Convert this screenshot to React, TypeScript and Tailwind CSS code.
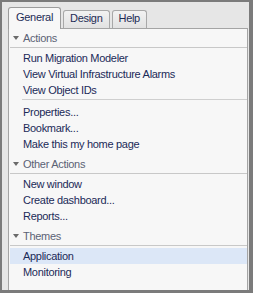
import React from "react";

type Item = { label: string; active?: boolean };

const sections: { title: string; groups: Item[][] }[] = [
  {
    title: "Actions",
    groups: [
      [
        { label: "Run Migration Modeler" },
        { label: "View Virtual Infrastructure Alarms" },
        { label: "View Object IDs" },
      ],
      [
        { label: "Properties..." },
        { label: "Bookmark..." },
        { label: "Make this my home page" },
      ],
    ],
  },
  {
    title: "Other Actions",
    groups: [
      [
        { label: "New window" },
        { label: "Create dashboard..." },
        { label: "Reports..." },
      ],
    ],
  },
  {
    title: "Themes",
    groups: [[{ label: "Application", active: true }, { label: "Monitoring" }]],
  },
];

function Tab({ label, active }: { label: string; active?: boolean }) {
  if (active) {
    return (
      <div className="relative z-10 -mb-px h-[22px] px-[7px] pt-[4px] rounded-t-[3px] border border-b-0 border-[#9c9c9c] bg-[#f7f7f7] text-[#1d2b55]">
        {label}
      </div>
    );
  }
  return (
    <div className="h-[18px] px-[6px] pt-[2px] rounded-t-[3px] border border-b-0 border-[#a8a8a8] bg-gradient-to-b from-[#f2f2f2] to-[#e2e2e2] text-[#1d2b55]">
      {label}
    </div>
  );
}

function Header({ title, first }: { title: string; first?: boolean }) {
  return (
    <div
      className={
        "ml-[1px] h-[19px] flex items-center gap-[4px] pl-[3px] border-b border-[#c8c8c8] text-[#5b6275] " +
        (first ? "" : "mt-[3px]")
      }
    >
      <span className="w-0 h-0 border-l-[3px] border-r-[3px] border-t-[4px] border-l-transparent border-r-transparent border-t-[#6a6a6a]" />
      <span>{title}</span>
    </div>
  );
}

export default function App() {
  return (
    <div
      className="w-[253px] h-[293px] bg-[#7b7b7b] pt-[2px] pl-[2px] pr-[4px] pb-[3px] text-[11px] tracking-[-0.3px] leading-none"
      style={{ fontFamily: '"Liberation Sans", Arial, sans-serif' }}
    >
      <div className="h-full bg-[#e6e6e6] flex flex-col pl-[6px] pr-px">
        <div className="h-[26px] flex items-end gap-[2px] shrink-0">
          <Tab label="General" active />
          <Tab label="Design" />
          <Tab label="Help" />
        </div>
        <div className="flex-1 border border-b-0 border-[#a4a4a4] bg-[#f7f7f7] text-[#1b2a57]">
          {sections.map((s, si) => (
            <div key={s.title}>
              <Header title={s.title} first={si === 0} />
              <div className="pt-[2px]">
                {s.groups.map((g, gi) => (
                  <div key={gi}>
                    {gi > 0 && (
                      <div className="ml-[13px] mt-px mb-[4px] h-px bg-[#cfcfcf]" />
                    )}
                    {g.map((it) => (
                      <div
                        key={it.label}
                        className={
                          "ml-px h-[16px] flex items-center pl-[13px] " +
                          (it.active ? "bg-[#dce7f7]" : "")
                        }
                      >
                        {it.label}
                      </div>
                    ))}
                  </div>
                ))}
              </div>
            </div>
          ))}
        </div>
      </div>
    </div>
  );
}
